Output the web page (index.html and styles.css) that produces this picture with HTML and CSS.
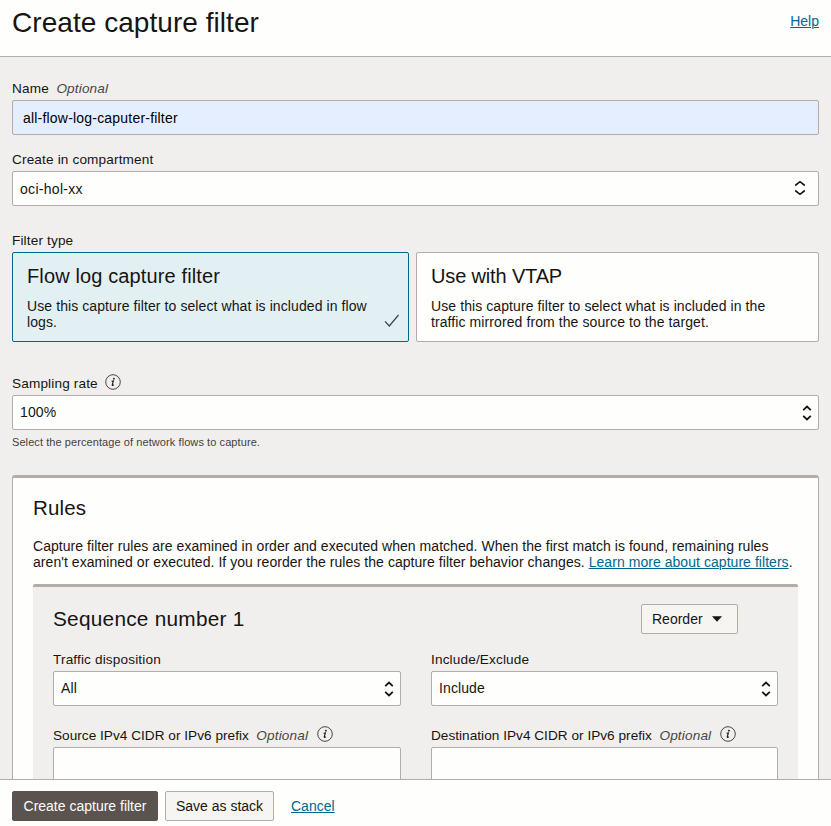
FILE: index.html
```html
<!DOCTYPE html>
<html lang="en">
<head>
<meta charset="utf-8">
<title>Create capture filter</title>
<link rel="stylesheet" href="styles.css">
</head>
<body>
<svg width="0" height="0" class="sprite" aria-hidden="true">
  <symbol id="updown" viewBox="0 0 10 16"><path d="M1.2 5.1 5 1.5 8.8 5.1M1.2 10.9 5 14.5 8.8 10.9" fill="none" stroke="#161513" stroke-width="1.8"/></symbol>
  <symbol id="updown-wide" viewBox="0 0 12 16"><path d="M1.2 5.5 6 1.7 10.8 5.5M1.2 10.5 6 14.3 10.8 10.5" fill="none" stroke="#161513" stroke-width="1.6"/></symbol>
  <symbol id="info" viewBox="0 0 16 16"><circle cx="8" cy="8" r="7.3" fill="none" stroke="#4a4642" stroke-width="1"/><circle cx="8.9" cy="4.7" r=".9" fill="#161513"/><path d="M6.6 7.3 8.4 7 7.2 10.9Q7.1 11.9 8.9 10.7" fill="none" stroke="#161513" stroke-width="1.1"/></symbol>
</svg>
<header class="header">
  <h1 class="title">Create capture filter</h1>
  <a class="link help" href="#">Help</a>
</header>
<main class="content">
  <div class="field">
    <div class="label"><span>Name</span><em>Optional</em></div>
    <div class="box autofill"><span>all-flow-log-caputer-filter</span></div>
  </div>
  <div class="field">
    <div class="label"><span>Create in compartment</span></div>
    <div class="box compartment"><span>oci-hol-xx</span><svg class="arrows wide"><use href="#updown-wide"/></svg></div>
  </div>
  <div class="field types">
    <div class="label"><span>Filter type</span></div>
    <div class="cards">
      <div class="card selected">
        <h2 class="heading flow">Flow log capture filter</h2>
        <p class="text">Use this capture filter to select what is included in flow<br>logs.</p>
        <svg class="check" viewBox="0 0 16 14"><path d="M1 7.3 5.3 12 14.5 1" fill="none" stroke="#3c4545" stroke-width="1.2"/></svg>
      </div>
      <div class="card">
        <h2 class="heading vtap">Use with VTAP</h2>
        <p class="text">Use this capture filter to select what is included in the<br>traffic mirrored from the source to the target.</p>
      </div>
    </div>
  </div>
  <div class="field sampling">
    <div class="label"><span>Sampling rate</span><svg class="info"><use href="#info"/></svg></div>
    <div class="box select"><span>100%</span><svg class="arrows"><use href="#updown"/></svg></div>
    <div class="hint">Select the percentage of network flows to capture.</div>
  </div>
  <section class="rules">
    <h2 class="heading rules-title">Rules</h2>
    <p class="text intro">Capture filter rules are examined in order and executed when matched. When the first match is found, remaining rules<br>aren't examined or executed. If you reorder the rules the capture filter behavior changes. <a class="link" href="#">Learn more about capture filters</a>.</p>
    <div class="sequence">
      <div class="seq-head">
        <h2 class="heading seq">Sequence number 1</h2>
        <button class="button reorder"><span>Reorder</span><svg width="10" height="6" viewBox="0 0 10 6"><path d="M0 .3H10L5 5.7Z" fill="#161513"/></svg></button>
      </div>
      <div class="grid">
        <div>
          <div class="label"><span>Traffic disposition</span></div>
          <div class="box select"><span>All</span><svg class="arrows"><use href="#updown"/></svg></div>
        </div>
        <div>
          <div class="label"><span>Include/Exclude</span></div>
          <div class="box select"><span>Include</span><svg class="arrows"><use href="#updown"/></svg></div>
        </div>
        <div>
          <div class="label prefix"><span>Source IPv4 CIDR or IPv6 prefix</span><em>Optional</em><svg class="info"><use href="#info"/></svg></div>
          <div class="box"></div>
        </div>
        <div>
          <div class="label prefix"><span>Destination IPv4 CIDR or IPv6 prefix</span><em>Optional</em><svg class="info"><use href="#info"/></svg></div>
          <div class="box"></div>
        </div>
      </div>
    </div>
  </section>
</main>
<footer class="footer">
  <button class="button primary"><span>Create capture filter</span></button>
  <button class="button save"><span>Save as stack</span></button>
  <a class="link cancel" href="#">Cancel</a>
</footer>
</body>
</html>
```
FILE: styles.css
```css
* { box-sizing: border-box; }
body {
  margin: 0;
  height: 826px;
  display: flex;
  flex-direction: column;
  overflow: hidden;
  font: 14px/16px "Liberation Sans", Arial, sans-serif;
  color: #161513;
  background: #f1efed;
}
h1, h2, p { margin: 0; font-weight: 400; }
.sprite { position: absolute; }
.header {
  flex: none;
  height: 57px;
  padding: 0 12px;
  display: flex;
  justify-content: space-between;
  background: #fefefc;
  border-bottom: 1px solid #b3aca7;
}
.title { font-size: 28px; line-height: 32px; margin-top: 7px; letter-spacing: .05px; }
.link { color: #00688c; text-decoration: underline; text-underline-offset: 1px; text-decoration-thickness: 1px; }
.help { margin-top: 13px; }
.content { flex: 1; min-height: 0; overflow: hidden; padding: 23px 12px 0; }
.field { margin-bottom: 16px; }
.label { display: flex; height: 17px; padding-top: 1px; margin-bottom: 3px; font-size: 13.6px; letter-spacing: .15px; white-space: nowrap; }
.label.prefix { letter-spacing: .03px; }
.label em { margin-left: 7.5px; color: #4a4642; letter-spacing: .15px; }
.info { flex: none; width: 16px; height: 16px; margin: -2px 0 0 7px; }
.prefix .info { margin-left: 9px; }
.box {
  height: 35px;
  padding: 0 7px;
  display: flex;
  align-items: center;
  justify-content: space-between;
  background: #fefefc;
  border: 1px solid #b3aca7;
  border-radius: 2px;
}
.autofill { padding-left: 10px; background: #e5eeff; color: #000; letter-spacing: .2px; }
.compartment { padding-right: 12px; letter-spacing: .3px; }
.select { padding-right: 6px; letter-spacing: .1px; }
.select span { margin-top: -2px; }
.arrows { width: 10px; height: 16px; }
.arrows.wide { width: 12px; margin-top: -1px; }
.types { margin-top: 26px; }
.cards { display: grid; grid-template-columns: 397px 403px; gap: 7px; }
.card {
  position: relative;
  height: 90px;
  padding: 10px 14px;
  background: #fefefc;
  border: 1px solid #b3aca7;
  border-radius: 2px;
}
.card.selected { background: #e2eff3; border-color: #00688c; }
.card .text { margin-top: 9px; white-space: nowrap; letter-spacing: .09px; }
.check { position: absolute; right: 8px; bottom: 13px; width: 16px; height: 14px; }
.heading { font-size: 20px; line-height: 26px; white-space: nowrap; }
.flow { letter-spacing: .13px; }
.vtap { letter-spacing: -.15px; }
.rules-title { font-size: 20.5px; letter-spacing: .15px; }
.sampling { margin-top: 33px; }
.hint { margin-top: 5px; font-size: 11px; line-height: 14px; letter-spacing: .08px; color: #45413d; }
.rules {
  margin-top: 26px;
  padding: 17px 20px 0;
  background: #fefefc;
  border: 1px solid #b3aca7;
  border-top-width: 3px;
  border-radius: 3px 3px 0 0;
}
.intro { margin-top: 17px; white-space: nowrap; letter-spacing: .048px; }
.sequence {
  margin-top: 14px;
  height: 300px;
  padding: 17px 20px 0;
  background: #f1efed;
  border-top: 3px solid #b3aca7;
  border-radius: 2px 2px 0 0;
}
.seq-head { display: flex; justify-content: space-between; height: 47px; padding-right: 40px; }
.seq { margin-top: 2px; font-size: 20.8px; letter-spacing: .25px; }
.button {
  display: flex;
  align-items: center;
  justify-content: center;
  height: 30px;
  padding: 0;
  font: inherit;
  color: #161513;
  background: #f7f5f2;
  border: 1px solid #b3aca7;
  border-radius: 2px;
  white-space: nowrap;
}
.reorder { width: 97px; padding-left: 10px; justify-content: flex-start; gap: 9px; }
.grid { display: grid; grid-template-columns: 348px 347px; gap: 21px 30px; }
.footer {
  flex: none;
  height: 47px;
  padding: 11px 12px 0;
  display: flex;
  background: #fefefc;
  border-top: 1px solid #b3aca7;
}
.primary { width: 146px; color: #fefefc; background: #5b534f; border-color: #5b534f; }
.save { width: 109px; margin-left: 7px; }
.cancel { margin: 7px 0 0 17px; }
```
